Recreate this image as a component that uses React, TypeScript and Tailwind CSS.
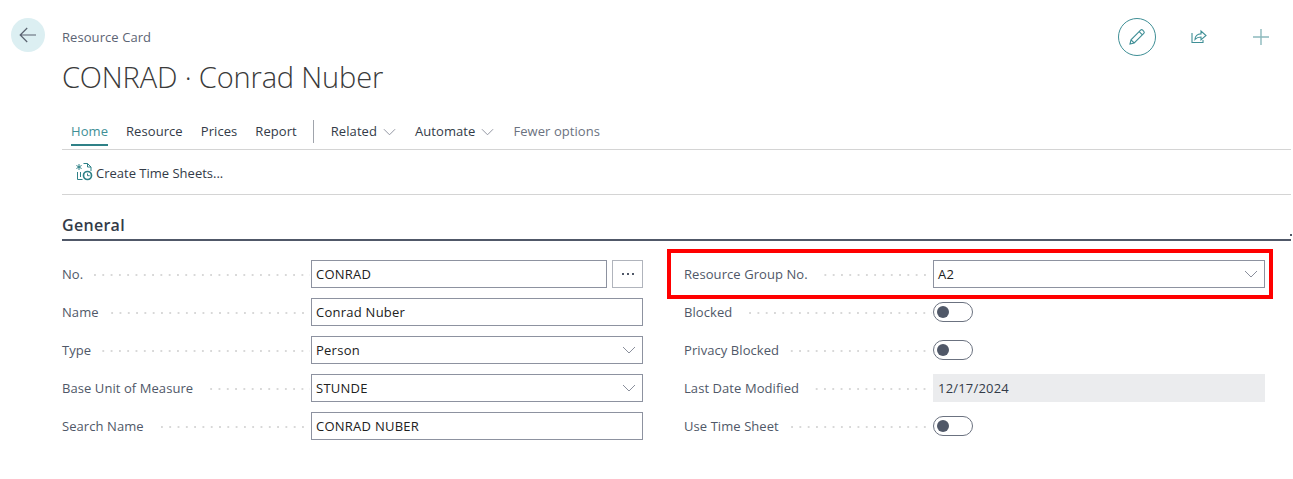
import React from "react";

const font = { fontFamily: '"Open Sans","Noto Sans",sans-serif' };

function Chevron({ className = "" }: { className?: string }) {
  return (
    <svg width="14" height="8" viewBox="0 0 14 8" fill="none" className={className}>
      <path d="M1 1l6 6 6-6" stroke="#8a8f9c" strokeWidth="1" />
    </svg>
  );
}

function Label({ text, width }: { text: string; width: number }) {
  return (
    <div className="flex items-center" style={{ width }}>
      <span className="text-[13px] tracking-[0.07px] pt-px text-[#505868] whitespace-nowrap">{text}</span>
      <div className="flex-1 h-[2px] ml-[11px] mr-px mt-[2px] bg-[linear-gradient(to_right,#d8d8d8_2px,transparent_2px)] bg-[length:8.3px_2px] bg-repeat-x [background-position:right]" />
    </div>
  );
}

function Field({ label, value, select }: { label: string; value: string; select?: boolean }) {
  return (
    <div className="flex items-center h-7">
      <Label text={label} width={249} />
      <div className="flex-1 h-7 border border-[#8d92a0] flex items-center justify-between pl-1 pr-[6px]">
        <span className="text-[13px] tracking-[0.25px] pt-px text-[#212121]">{value}</span>
        {select && <Chevron />}
      </div>
    </div>
  );
}

function Toggle({ label }: { label: string }) {
  return (
    <div className="flex items-center h-7">
      <Label text={label} width={249} />
      <div className="w-10 h-5 rounded-full border border-[#6b7280] flex items-center pl-[3px]">
        <div className="w-3 h-3 rounded-full bg-[#505868]" />
      </div>
    </div>
  );
}

export default function App() {
  return (
    <div style={font} className="w-[1293px] h-[479px] bg-white flex overflow-hidden">
      <div className="w-[62px] pl-[11px] pt-[18px] shrink-0">
        <div className="w-[34px] h-[34px] rounded-full bg-[#dceff2] flex items-center justify-center">
          <svg width="18" height="16" viewBox="0 0 18 16" fill="none" stroke="#5a6270" strokeWidth="1.2">
            <path d="M17 8H1.5M8.2 1L1.2 8l7 7" />
          </svg>
        </div>
      </div>

      <div className="flex-1 min-w-0 flex flex-col">
        <div className="flex justify-between items-start h-[111px]">
          <div>
            <div className="text-[13px] tracking-[0.07px] text-[#5c6474] mt-[28px] leading-[18px]">Resource Card</div>
            <div className="text-[29px] font-light tracking-[-0.15px] text-[#3a3a3a] mt-[12px] leading-[38px]">CONRAD · Conrad Nuber</div>
          </div>
          <div className="flex items-center mt-[18px] mr-[24px]">
            <div className="w-[38px] h-[38px] rounded-full border border-[#3f8f96] flex items-center justify-center">
              <svg width="18" height="18" viewBox="0 0 18 18" fill="none" stroke="#3f8f96" strokeWidth="1.1">
                <path d="M2 16l1-4.2L12.6 2.2a1.5 1.5 0 0 1 2.1 0l1.1 1.1a1.5 1.5 0 0 1 0 2.1L6.2 15l-4.2 1zM3 11.8L6.2 15M11.2 3.6l3.2 3.2" />
              </svg>
            </div>
            <div className="w-[16px] h-[16px] ml-[35px] -mt-[2px]">
              <svg width="16" height="16" viewBox="0 0 16 16" fill="none" stroke="#3f8f96" strokeWidth="1.1">
                <path d="M1 5v9.5h11V12" />
                <path d="M4 11.5c0-3.6 2.5-5.6 6-5.6V3l5 4.5-5 4.4V9C7.5 9 5.5 9.7 4 11.5z" />
              </svg>
            </div>
            <div className="w-[16px] h-[16px] ml-[46px]">
              <svg width="16" height="16" viewBox="0 0 16 16" fill="none" stroke="#8cb9bd" strokeWidth="1.4">
                <path d="M8 0v16M0 8h16" />
              </svg>
            </div>
          </div>
        </div>

        <div className="flex items-center h-[39px] border-b border-[#d4d4d4] text-[13px] tracking-[0.07px] text-[#333b48] mr-[2px]">
          <div className="ml-[9px] h-[26px] flex items-center text-[#3f8f96] border-b-2 border-[#2f8187] mt-[5px] pt-[1px]">Home</div>
          <span className="ml-[18px] mt-[3px]">Resource</span>
          <span className="ml-[18px] mt-[3px]">Prices</span>
          <span className="ml-[18px] mt-[3px]">Report</span>
          <div className="w-px h-[23px] bg-[#a0a4ac] ml-[16px] mt-[3px]" />
          <span className="ml-[17px] mt-[3px]">Related</span>
          <Chevron className="ml-[6px] w-[13px] mt-[3px]" />
          <span className="ml-[19px] mt-[3px]">Automate</span>
          <Chevron className="ml-[6px] w-[13px] mt-[3px]" />
          <span className="ml-[19px] mt-[3px] text-[#6b7280]">Fewer options</span>
        </div>

        <div className="flex items-center h-[45px] border-b border-[#d4d4d4] pl-[13px] mr-[2px]">
          <svg width="18" height="18" viewBox="0 0 18 18" fill="none" stroke="#2f8187" strokeWidth="1">
            <path d="M4 1v6M1.4 2.5l5.2 3M1.4 5.5l5.2-3" />
            <path d="M8.5 .5h4l3.5 3.5v4M12.5 .5v3.5H16" />
            <path d="M2.5 9v7.5h5M5.5 9v5" />
            <circle cx="12.5" cy="12.5" r="4" fill="#fff" strokeWidth="1.7" />
            <path d="M12.5 10.5v2.2h2.2" />
          </svg>
          <span className="ml-[3px] mt-[3px] text-[13px] text-[#333b48]">Create Time Sheets...</span>
        </div>

        <div className="h-[46px] flex items-end border-b-2 border-[#505868] mr-[2px] relative">
          <span className="text-[16px] font-semibold tracking-[0.3px] text-[#333b48] leading-[22px] mb-[3px]">General</span>
          <div className="absolute right-[-1px] bottom-[3px] w-[2px] h-[2px] bg-[#505868]" />
        </div>

        <div className="flex mt-[8px] pr-[20px]">
          <div className="w-[581px] flex flex-col gap-[10px] pt-[11px]">
            <div className="flex items-center h-7">
              <Label text="No." width={249} />
              <div className="flex-1 h-7 border border-[#8d92a0] flex items-center pl-1">
                <span className="text-[13px] tracking-[0.25px] pt-px text-[#212121]">CONRAD</span>
              </div>
              <div className="ml-[5px] w-[31px] h-7 border border-[#b0b4bc] flex items-center justify-center gap-[3px]">
                <div className="w-[2px] h-[2px] bg-[#505868]" />
                <div className="w-[2px] h-[2px] bg-[#505868]" />
                <div className="w-[2px] h-[2px] bg-[#505868]" />
              </div>
            </div>
            <Field label="Name" value="Conrad Nuber" />
            <Field label="Type" value="Person" select />
            <Field label="Base Unit of Measure" value="STUNDE" select />
            <Field label="Search Name" value="CONRAD NUBER" />
          </div>

          <div className="flex-1 ml-[24px] flex flex-col">
            <div className="border-4 border-[#ff0000] h-[50px] -mb-[1px] flex items-center pl-[13px] pr-[4px] w-[606px]">
              <div className="flex-1">
                <Field label="Resource Group No." value="A2" select />
              </div>
            </div>
            <div className="pl-[17px] w-[598px] flex flex-col gap-[10px]">
              <Toggle label="Blocked" />
              <Toggle label="Privacy Blocked" />
              <div className="flex items-center h-7">
                <Label text="Last Date Modified" width={249} />
                <div className="flex-1 h-7 bg-[#ebecee] flex items-center pl-[5px]">
                  <span className="text-[13px] tracking-[0.2px] pt-px text-[#333b48]">12/17/2024</span>
                </div>
              </div>
              <Toggle label="Use Time Sheet" />
            </div>
          </div>
        </div>
      </div>
    </div>
  );
}
